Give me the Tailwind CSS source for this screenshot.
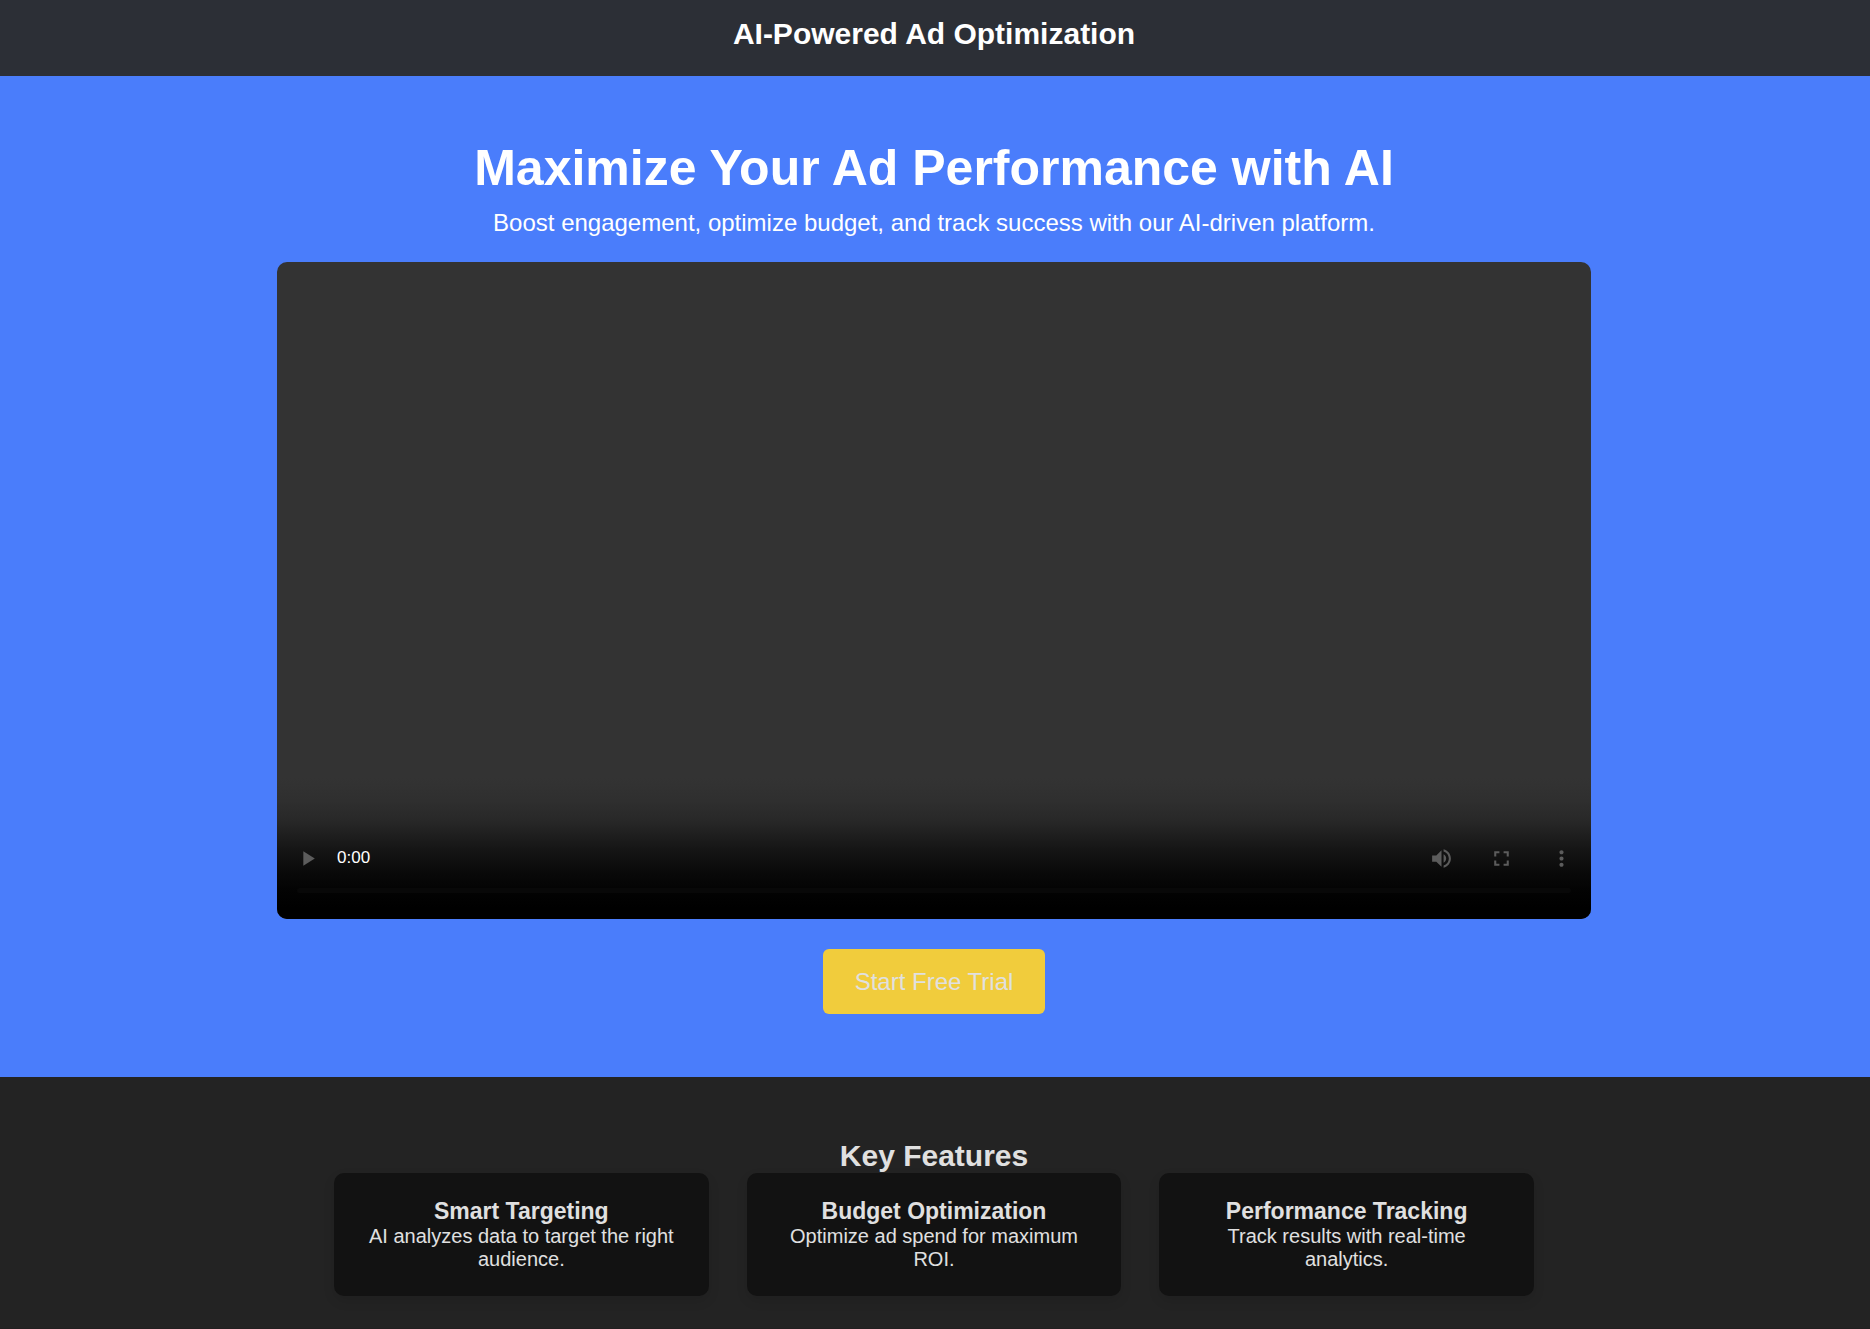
<!DOCTYPE html>
<html lang="en">
<head>
<meta charset="utf-8">
<title>AI-Powered Ad Optimization</title>
<script src="https://cdn.jsdelivr.net/npm/@tailwindcss/browser@4"></script>
</head>
<body class="min-h-screen bg-[#221f20] text-center font-['Liberation_Sans',Arial,sans-serif] text-[#e0e0e0]">
<header class="bg-[#2c2f36] pt-4 pr-[26px] pb-6 pl-6 text-white">
  <h1 class="text-3xl font-bold">AI-Powered Ad Optimization</h1>
</header>
<main>
  <section class="flex flex-col items-center bg-[#4a7dfb] pt-16 pr-[26px] pb-[63px] pl-6 text-white">
    <h2 class="text-[50px] leading-[57px] font-bold">Maximize Your Ad Performance with AI</h2>
    <p class="mt-3 text-2xl leading-[28px]">Boost engagement, optimize budget, and track success with our AI-driven platform.</p>
    <div class="mt-[25px] flex aspect-[2/1] w-full max-w-[1314px] flex-col justify-end overflow-hidden rounded-[10px] bg-[#333]">
      <div class="flex flex-col bg-linear-[to_bottom,#333_0%,#2f2f2f_16%,#282828_30%,#1e1e1e_41%,#141414_52%,#0a0a0a_66%,#030303_80%,#000_92%] pt-[50px] text-[#5c5c5c]">
        <div class="flex h-[60px] items-center">
          <button type="button" aria-label="Play" class="flex size-[60px] items-center justify-center">
            <svg class="size-[25px]" viewBox="0 0 24 24" fill="currentColor"><path d="M8 5v14l11-7z"/></svg>
          </button>
          <span class="text-[17px] text-white">0:00</span>
          <div class="ml-auto flex">
            <button type="button" aria-label="Mute" class="flex size-[60px] items-center justify-center">
              <svg class="size-[25px]" viewBox="0 0 24 24" fill="currentColor"><path d="M3 9v6h4l5 5V4L7 9H3zm13.500 3c0-1.770-1.020-3.290-2.500-4.030v8.050c1.480-.730 2.500-2.250 2.500-4.020zM14 3.230v2.060c2.890.860 5 3.540 5 6.710s-2.110 5.850-5 6.710v2.060c4.010-.910 7-4.490 7-8.770s-2.990-7.860-7-8.770z"/></svg>
            </button>
            <button type="button" aria-label="Full screen" class="flex size-[60px] items-center justify-center">
              <svg class="size-[25px]" viewBox="0 0 24 24" fill="currentColor"><path d="M7 14H5v5h5v-2H7v-3zm-2-4h2V7h3V5H5v5zm12 7h-3v2h5v-5h-2v3zM14 5v2h3v3h2V5h-5z"/></svg>
            </button>
            <button type="button" aria-label="More options" class="flex size-[60px] items-center justify-center">
              <svg class="size-[25px]" viewBox="0 0 24 24" fill="currentColor"><path d="M12 8c1.100 0 2-.900 2-2s-.900-2-2-2-2 .900-2 2 .900 2 2 2zm0 2c-1.100 0-2 .900-2 2s.900 2 2 2 2-.900 2-2-.900-2-2-2zm0 6c-1.100 0-2 .900-2 2s.900 2 2 2 2-.900 2-2-.900-2-2-2z"/></svg>
            </button>
          </div>
        </div>
        <div class="mx-5 mb-[26px] h-[5px] rounded-full bg-[#080808]"></div>
      </div>
    </div>
    <button type="button" class="mt-[30px] rounded-md bg-[#f1cc3c] px-8 py-[18px] text-2xl leading-[29px] text-[#e0e0e0]">Start Free Trial</button>
  </section>
  <section class="bg-[#232323] pt-[62px] pr-[26px] pb-8 pl-6">
    <h2 class="text-3xl leading-[34px] font-bold">Key Features</h2>
    <div class="mx-auto grid max-w-[1200px] grid-cols-3 gap-[38px]">
      <article class="rounded-[10px] bg-[#121212] p-[25px] shadow-[0_5px_12px_rgba(0,0,0,0.1)]">
        <h3 class="mb-px text-[23px] leading-[26px] font-bold">Smart Targeting</h3>
        <p class="text-xl leading-[23px]">AI analyzes data to target the right audience.</p>
      </article>
      <article class="rounded-[10px] bg-[#121212] p-[25px] shadow-[0_5px_12px_rgba(0,0,0,0.1)]">
        <h3 class="mb-px text-[23px] leading-[26px] font-bold">Budget Optimization</h3>
        <p class="text-xl leading-[23px]">Optimize ad spend for maximum ROI.</p>
      </article>
      <article class="rounded-[10px] bg-[#121212] p-[25px] shadow-[0_5px_12px_rgba(0,0,0,0.1)]">
        <h3 class="mb-px text-[23px] leading-[26px] font-bold">Performance Tracking</h3>
        <p class="text-xl leading-[23px]">Track results with real-time analytics.</p>
      </article>
    </div>
  </section>
</main>
</body>
</html>
